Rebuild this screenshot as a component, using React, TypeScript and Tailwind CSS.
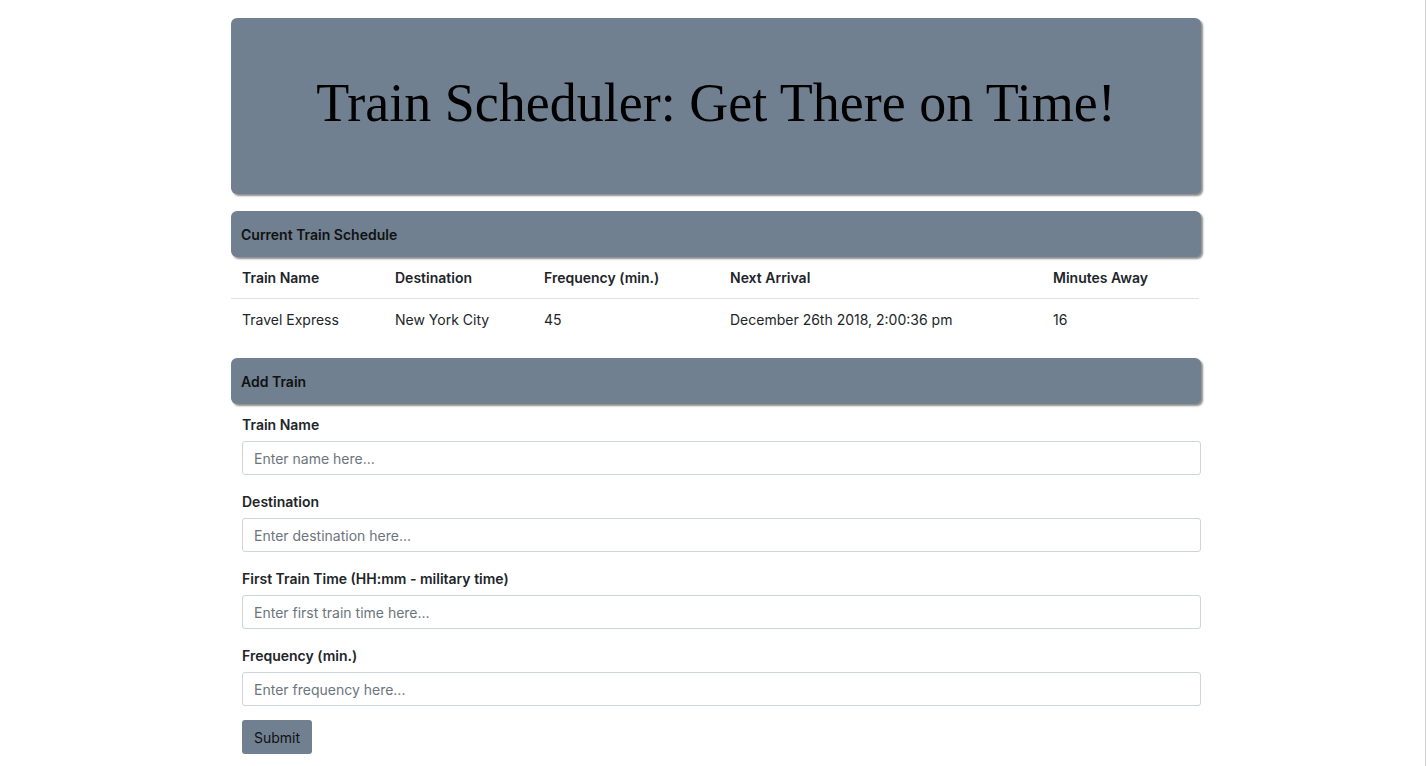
import React from "react";

const sans = { fontFamily: "Inter, 'Noto Sans', sans-serif" };

export default function App() {
  const headerCls =
    "bg-[#708090] rounded-md shadow-[2px_2px_2px_rgba(0,0,0,0.45)] px-[10px] h-[46px] flex items-center text-[14px] font-semibold text-[#111]";
  const fields = [
    ["Train Name", "Enter name here..."],
    ["Destination", "Enter destination here..."],
    ["First Train Time (HH:mm - military time)", "Enter first train time here..."],
    ["Frequency (min.)", "Enter frequency here..."],
  ];
  const th = "font-semibold pl-[11px] align-middle";
  return (
    <div className="min-h-[766px] bg-white border-r border-[#d0d0d0] text-[#212529]" style={sans}>
      <div className="ml-[231px] w-[970px] pt-[18px] pb-[12px]">
        <div className="bg-[#708090] rounded-md shadow-[2px_2px_2px_rgba(0,0,0,0.45)] h-[176px] flex items-center justify-center">
          <h1
            className="text-[54px] text-black leading-none -mt-[6px] text-center whitespace-nowrap"
            style={{ fontFamily: "'Liberation Serif', serif" }}
          >
            Train Scheduler: Get There on Time!
          </h1>
        </div>

        <div className={`${headerCls} mt-[17px]`}>Current Train Schedule</div>
        <table className="w-[968px] text-[14px] text-left">
          <thead>
            <tr className="border-b border-[#dee2e6]">
              <th className={`${th} h-[41px] w-[153px]`}>Train Name</th>
              <th className={`${th} w-[149px]`}>Destination</th>
              <th className={`${th} w-[186px]`}>Frequency (min.)</th>
              <th className={`${th} w-[323px]`}>Next Arrival</th>
              <th className={th}>Minutes Away</th>
            </tr>
          </thead>
          <tbody>
            <tr>
              <td className="pl-[11px] h-[43px]">Travel Express</td>
              <td className="pl-[11px]">New York City</td>
              <td className="pl-[11px]">45</td>
              <td className="pl-[11px]">December 26th 2018, 2:00:36 pm</td>
              <td className="pl-[11px]">16</td>
            </tr>
          </tbody>
        </table>

        <div className={`${headerCls} mt-[17px] h-[45px]`}>Add Train</div>
        <form className="pl-[11px] pt-[11px]" onSubmit={(e) => e.preventDefault()}>
          {fields.map(([label, ph]) => (
            <div key={label} className="mb-[17px]">
              <label className="block text-[14px] font-semibold mb-[6px] leading-[20px]">{label}</label>
              <input
                className="block w-full h-[34px] border border-[#ced4da] rounded-[3px] px-[11px] text-[14px] placeholder:text-[#6c757d] outline-none"
                placeholder={ph}
              />
            </div>
          ))}
          <button
            type="submit"
            className="bg-[#708090] rounded-[3px] h-[34px] w-[70px] text-[14px] text-[#111] -mt-[3px]"
          >
            Submit
          </button>
        </form>
      </div>
    </div>
  );
}
